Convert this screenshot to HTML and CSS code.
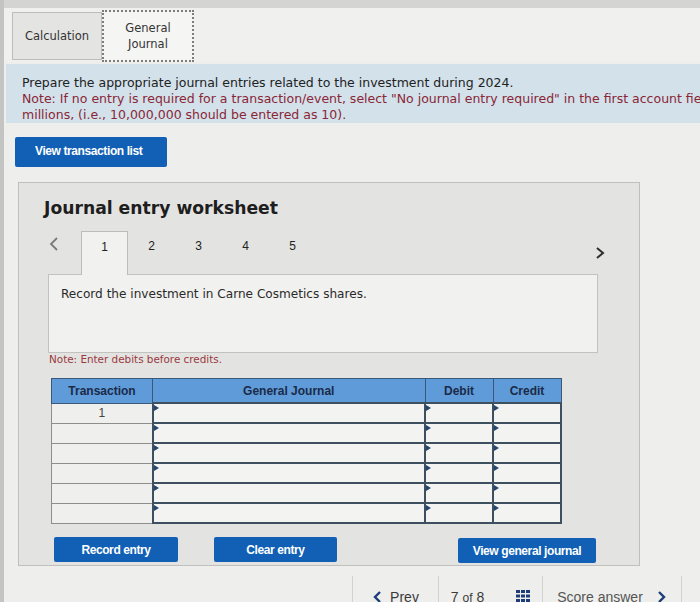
FILE: index.html
```html
<!DOCTYPE html>
<html lang="en">
<head>
    <meta charset="UTF-8">
    <meta name="viewport" content="width=device-width, initial-scale=1.0">
    <title>General Journal</title>
    <link rel="stylesheet" href="styles.css">
</head>
<body>
    <div class="topbar"></div>

    <div class="tabs">
        <div class="tab">Calculation</div>
        <div class="tab tab-active">General<br>Journal</div>
    </div>

    <div class="instructions">
        <p>Prepare the appropriate journal entries related to the investment during 2024.</p>
        <p class="note">Note: If no entry is required for a transaction/event, select "No journal entry required" in the first account field. Enter your answers in</p>
        <p class="note">millions, (i.e., 10,000,000 should be entered as 10).</p>
    </div>

    <div class="main">
        <button class="btn btn-list">View transaction list</button>

        <div class="worksheet">
            <h2 class="worksheet-title">Journal entry worksheet</h2>

            <div class="steps">
                <span class="step-arrow">
                    <svg width="10" height="16" viewBox="0 0 10 16"><polyline points="8,2 2,8 8,14" fill="none" stroke="#7a7a7a" stroke-width="1.8"/></svg>
                </span>
                <div class="step step-current">1</div>
                <div class="step">2</div>
                <div class="step">3</div>
                <div class="step">4</div>
                <div class="step">5</div>
                <span class="step-arrow step-next">
                    <svg width="10" height="16" viewBox="0 0 10 16"><polyline points="2,3 8,8 2,13" fill="none" stroke="#2e2e2e" stroke-width="2"/></svg>
                </span>
            </div>

            <div class="step-body">Record the investment in Carne Cosmetics shares.</div>

            <p class="debit-note">Note: Enter debits before credits.</p>

            <table class="journal">
                <thead>
                    <tr>
                        <th class="col-trans">Transaction</th>
                        <th class="col-account">General Journal</th>
                        <th class="col-amount">Debit</th>
                        <th class="col-amount">Credit</th>
                    </tr>
                </thead>
                <tbody>
                    <tr><td class="trans">1</td><td class="entry"></td><td class="entry"></td><td class="entry"></td></tr>
                    <tr><td class="trans"></td><td class="entry"></td><td class="entry"></td><td class="entry"></td></tr>
                    <tr><td class="trans"></td><td class="entry"></td><td class="entry"></td><td class="entry"></td></tr>
                    <tr><td class="trans"></td><td class="entry"></td><td class="entry"></td><td class="entry"></td></tr>
                    <tr><td class="trans"></td><td class="entry"></td><td class="entry"></td><td class="entry"></td></tr>
                    <tr><td class="trans"></td><td class="entry"></td><td class="entry"></td><td class="entry"></td></tr>
                </tbody>
            </table>

            <div class="actions">
                <button class="btn btn-record">Record entry</button>
                <button class="btn btn-clear">Clear entry</button>
                <button class="btn btn-view">View general journal</button>
            </div>
        </div>
    </div>

    <div class="pager">
        <div class="pager-item pager-prev">
            <svg width="10" height="14" viewBox="0 0 10 14"><polyline points="8,2 3,7 8,12" fill="none" stroke="#1d3c78" stroke-width="2.4"/></svg>
            <span>Prev</span>
        </div>
        <div class="pager-item pager-count">
            <span>7 <small>of</small> 8</span>
            <svg width="14" height="12" viewBox="0 0 14 12" fill="#1d3c78">
                <rect x="0" y="0" width="4" height="3"/><rect x="5" y="0" width="4" height="3"/><rect x="10" y="0" width="4" height="3"/>
                <rect x="0" y="4.5" width="4" height="3"/><rect x="5" y="4.5" width="4" height="3"/><rect x="10" y="4.5" width="4" height="3"/>
                <rect x="0" y="9" width="4" height="3"/><rect x="5" y="9" width="4" height="3"/><rect x="10" y="9" width="4" height="3"/>
            </svg>
        </div>
        <div class="pager-item pager-score">
            <span>Score answer</span>
            <svg width="10" height="14" viewBox="0 0 10 14"><polyline points="2,2 7,7 2,12" fill="none" stroke="#1d3c78" stroke-width="2.4"/></svg>
        </div>
        <div class="pager-item"></div>
    </div>
</body>
</html>
```

FILE: styles.css
```css
/* Assignment page: tabs, instructions and the journal worksheet */

body {
    font-family: 'DejaVu Sans', Verdana, sans-serif;
    margin: 0;
    width: 700px;
    height: 602px;
    overflow: hidden;
    background: #eeeeec;
    border-left: 4px solid #c4c4c2;
    box-sizing: border-box;
    color: #2a2a2a;
}

.topbar {
    height: 8px;
    background: #d4d4d2;
}

/* Question tabs */
.tabs {
    display: flex;
    align-items: flex-end;
    height: 54px;
    padding-left: 8px;
    background: #f0f0ee;
}

.tab {
    width: 88px;
    height: 46px;
    margin-bottom: 2px;
    display: flex;
    align-items: center;
    justify-content: center;
    text-align: center;
    font-size: 11.5px;
    line-height: 16px;
    color: #333;
    background: #e4e4e2;
    border: 1px solid #bcbcba;
}

.tab-active {
    width: 88px;
    height: 48px;
    margin-bottom: 0;
    background: #f5f5f3;
    border: 2px dotted #7c7c7c;
}

/* Instructions box */
.instructions {
    margin: 2px 0 0 2px;
    padding: 11px 0 0 16px;
    background: #d2e1ea;
    white-space: nowrap;
}

.instructions p {
    margin: 0;
    font-size: 12.5px;
    line-height: 16px;
    color: #222;
}

.instructions .note {
    color: #8a2636;
}

/* Buttons */
.btn {
    font-family: 'Liberation Sans', Arial, sans-serif;
    font-weight: bold;
    font-size: 12px;
    letter-spacing: -0.4px;
    color: #fff;
    background: #1160b6;
    border: none;
    border-radius: 2px;
    cursor: pointer;
}

.main {
    padding: 14px 0 0 11px;
}

.btn-list {
    width: 152px;
    height: 30px;
    padding: 0 0 2px 0;
    text-align: left;
    text-indent: 20px;
}

/* Worksheet panel */
.worksheet {
    margin: 15px 0 0 3px;
    width: 622px;
    box-sizing: border-box;
    padding: 15px 0 2px 29px;
    background: #e3e3e1;
    border: 1px solid #bfbfbd;
}

.worksheet-title {
    margin: 0 0 13px -4px;
    font-size: 17.2px;
    line-height: 20px;
    font-weight: bold;
    color: #1e1e1e;
}

.steps {
    display: flex;
    align-items: flex-start;
    width: 562px;
    height: 43px;
    position: relative;
    z-index: 1;
}

.step-arrow {
    width: 32px;
    padding: 5px 0 0 1px;
    display: flex;
}

.step {
    width: 47px;
    height: 43px;
    box-sizing: border-box;
    padding-top: 8px;
    text-align: center;
    font-family: 'Liberation Sans', Arial, sans-serif;
    font-size: 12px;
    line-height: 14px;
    color: #222;
}

.step-current {
    background: #f1f1ef;
    border: 1px solid #bcbcba;
    border-bottom: none;
    height: 44px;
}

.step-next {
    margin-left: auto;
    width: 20px;
    padding-top: 14px;
    justify-content: center;
}

.step-body {
    width: 550px;
    height: 79px;
    box-sizing: border-box;
    padding: 11px 12px;
    font-size: 12.1px;
    line-height: 16px;
    color: #2a2a2a;
    background: #f1f1ef;
    border: 1px solid #c2c2c0;
}

.debit-note {
    margin: 0 0 13px 1px;
    font-size: 10.4px;
    line-height: 12px;
    color: #9a3a40;
}

/* Journal table */
.journal {
    margin-left: 3px;
    width: 511px;
    border-collapse: collapse;
    font-family: 'Liberation Sans', Arial, sans-serif;
    font-size: 12px;
}

.journal th {
    height: 23px;
    padding: 0;
    font-weight: bold;
    color: #1b2a48;
    background: #5e9bd8;
    border: 1px solid #3a5878;
}

.col-trans {
    width: 100px;
}

.col-amount {
    width: 67px;
}

.journal td {
    height: 20px;
    padding: 0;
    box-sizing: border-box;
}

.journal .trans {
    text-align: center;
    color: #444;
    background: #efefed;
    border: 1px solid #8e8e8c;
}

.journal .entry {
    position: relative;
    background: #f3f3f1;
    border: 2px solid #3e4f60;
}

/* small marker on each input cell */
.journal .entry::before {
    content: "";
    position: absolute;
    top: 1px;
    left: 0;
    border-top: 3px solid transparent;
    border-bottom: 3px solid transparent;
    border-left: 5px solid #26456c;
}

.actions {
    display: flex;
    align-items: flex-start;
    margin-top: 13px;
}

.btn-record {
    margin-left: 6px;
    width: 124px;
    height: 25px;
}

.btn-clear {
    margin-left: 36px;
    width: 123px;
    height: 25px;
}

.btn-view {
    margin: 1px 0 0 121px;
    width: 138px;
    height: 25px;
}

/* Bottom pager */
.pager {
    display: flex;
    margin: 10px 0 0 348px;
    height: 30px;
    font-family: 'Liberation Sans', Arial, sans-serif;
    font-size: 14px;
    line-height: 16px;
    color: #3a3a3a;
}

.pager-item {
    display: flex;
    align-items: flex-start;
    gap: 8px;
    padding-top: 13px;
    border-left: 1px solid #d2d2d0;
}

.pager-item svg {
    margin-top: 1px;
}

.pager-prev {
    width: 85px;
    justify-content: center;
}

.pager-count {
    width: 103px;
    justify-content: center;
    gap: 32px;
}

.pager-count small {
    font-size: 12px;
}

.pager-score {
    width: 138px;
    justify-content: center;
    gap: 14px;
    color: #555;
}
```
